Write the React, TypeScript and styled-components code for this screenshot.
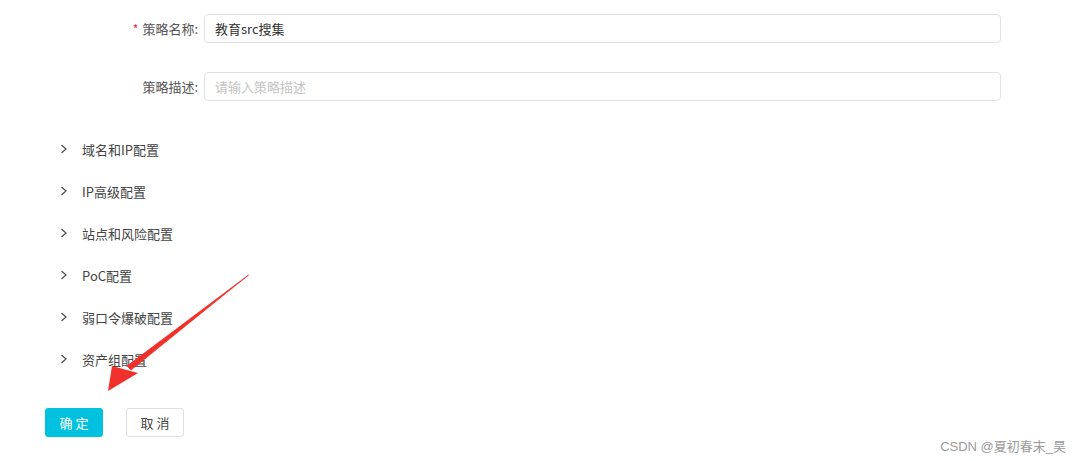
import React from "react";
import styled, { createGlobalStyle } from "styled-components";

const Global = createGlobalStyle`
  html, body { margin: 0; padding: 0; background: #fff; }
  body { font-family: "Noto Sans CJK SC", "Microsoft YaHei", sans-serif; color: #333; }
`;

const Page = styled.div`
  position: relative;
  width: 1080px;
  height: 461px;
  overflow: hidden;
  background: #fff;
`;

const Form = styled.div`
  display: flex;
  flex-direction: column;
  gap: 29px;
  padding-top: 14px;
`;

const FieldRow = styled.div`
  display: flex;
  align-items: center;
  height: 29px;
`;

const Label = styled.label`
  width: 204px;
  padding-right: 6px;
  box-sizing: border-box;
  text-align: right;
  font-size: 13px;
  color: #555;
  flex-shrink: 0;
`;

const Star = styled.span`
  color: #f5222d;
  margin-right: 4px;
  font-size: 12px;
`;

const Input = styled.input`
  width: 797px;
  height: 29px;
  box-sizing: border-box;
  border: 1px solid #e2e2e2;
  border-radius: 4px;
  padding: 0 10px;
  font-family: inherit;
  font-size: 13px;
  color: #333;
  outline: none;
  &::placeholder { color: #c4c4c4; }
`;

const Panels = styled.div`
  display: flex;
  flex-direction: column;
  margin-top: 27px;
  padding-left: 60px;
`;

const Panel = styled.div`
  display: flex;
  align-items: center;
  height: 42px;
  font-size: 13px;
  color: #444;
`;

const Chevron = styled.svg`
  width: 8px;
  height: 10px;
  margin-right: 14px;
`;

const Footer = styled.div`
  display: flex;
  gap: 23px;
  padding-left: 45px;
  margin-top: 28px;
`;

const Button = styled.button<{ $primary?: boolean }>`
  width: 58px;
  height: 29px;
  border-radius: 3px;
  font-family: inherit;
  font-size: 13px;
  letter-spacing: 3px;
  text-indent: 3px;
  border: 1px solid ${(p) => (p.$primary ? "#00c1de" : "#e0e0e0")};
  background: ${(p) => (p.$primary ? "#00c1de" : "#fff")};
  color: ${(p) => (p.$primary ? "#fff" : "#444")};
  cursor: pointer;
  padding: 0;
`;

const Watermark = styled.div`
  position: absolute;
  right: 14px;
  bottom: 6px;
  font-size: 13px;
  color: #9a9a9a;
  font-family: "Liberation Sans", "Noto Sans CJK SC", sans-serif;
`;

const Arrow = styled.svg`
  position: absolute;
  left: 0;
  top: 0;
  pointer-events: none;
`;

const panels = ["域名和IP配置", "IP高级配置", "站点和风险配置", "PoC配置", "弱口令爆破配置", "资产组配置"];

export default function App() {
  return (
    <Page>
      <Global />
      <Form>
        <FieldRow>
          <Label><Star>*</Star>策略名称:</Label>
          <Input defaultValue="教育src搜集" />
        </FieldRow>
        <FieldRow>
          <Label>策略描述:</Label>
          <Input placeholder="请输入策略描述" />
        </FieldRow>
      </Form>
      <Panels>
        {panels.map((t) => (
          <Panel key={t}>
            <Chevron viewBox="0 0 8 10">
              <path d="M1.5 1 L6 5 L1.5 9" fill="none" stroke="#555" strokeWidth="1.3" />
            </Chevron>
            {t}
          </Panel>
        ))}
      </Panels>
      <Footer>
        <Button $primary>确定</Button>
        <Button>取消</Button>
      </Footer>
      <Arrow width="1080" height="461" viewBox="0 0 1080 461">
        <path d="M248.5 275 L131 370 L127 366 Z" fill="#f0302a" stroke="#f0302a" strokeWidth="0.8" />
        <path d="M108 391 L112 366 L138 373 Z" fill="#f0302a" />
      </Arrow>
      <Watermark>CSDN @夏初春末_昊</Watermark>
    </Page>
  );
}
